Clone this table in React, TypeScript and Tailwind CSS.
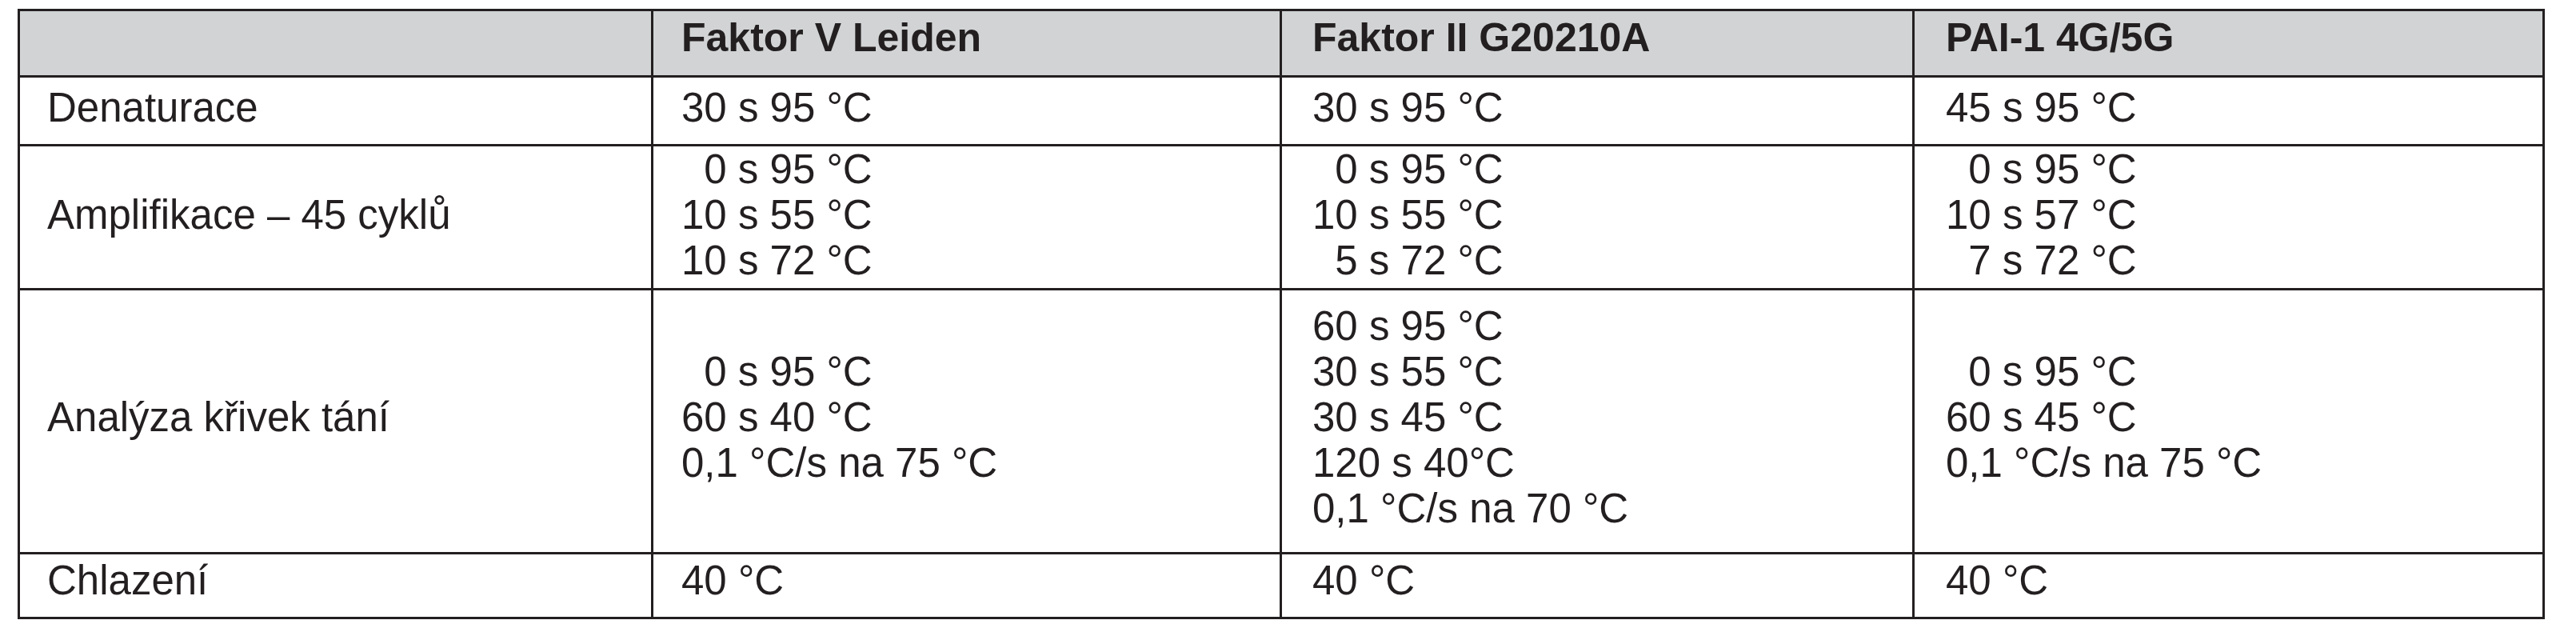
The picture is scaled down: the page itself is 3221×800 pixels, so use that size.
const NB = "\u00a0\u00a0"

// column left paddings, measured from the reference
const colPad = ["pl-[34px]", "pl-[35px]", "pl-[38px]", "pl-[39px]"]

const header = ["", "Faktor V Leiden", "Faktor II G20210A", "PAI-1 4G/5G"]

const rows: { cls: string; cells: string[][] }[] = [
  {
    cls: "h-[86px] pt-[9px] pb-[17px]",
    cells: [["Denaturace"], ["30 s 95 °C"], ["30 s 95 °C"], ["45 s 95 °C"]],
  },
  {
    cls: "h-[180px] pt-0 pb-[6px]",
    cells: [
      ["Amplifikace – 45 cyklů"],
      [NB + "0 s 95 °C", "10 s 55 °C", "10 s 72 °C"],
      [NB + "0 s 95 °C", "10 s 55 °C", NB + "5 s 72 °C"],
      [NB + "0 s 95 °C", "10 s 57 °C", NB + "7 s 72 °C"],
    ],
  },
  {
    cls: "h-[330px] pt-[16px] pb-[26px]",
    cells: [
      ["Analýza křivek tání"],
      [NB + "0 s 95 °C", "60 s 40 °C", "0,1 °C/s na 75 °C"],
      ["60 s 95 °C", "30 s 55 °C", "30 s 45 °C", "120 s 40°C", "0,1 °C/s na 70 °C"],
      [NB + "0 s 95 °C", "60 s 45 °C", "0,1 °C/s na 75 °C"],
    ],
  },
  {
    cls: "h-[81px] pt-[4px] pb-[17px]",
    cells: [["Chlazení"], ["40 °C"], ["40 °C"], ["40 °C"]],
  },
]

export default function App() {
  return (
    <div className="min-h-screen bg-white pt-[11px] pl-[22px] font-['Liberation_Sans',Arial,sans-serif] text-[#231f20]">
      <div className="grid w-[3160px] grid-cols-[792px_786px_791px_788px] border-l-[3px] border-t-[3px] border-[#231f20]">
        {header.map((h, i) => (
          <div
            key={"h" + i}
            className={`flex h-[83px] items-center border-b-[3px] border-r-[3px] border-[#231f20] bg-[#d1d3d4] pt-[5px] pb-[18px] text-[50px] font-bold leading-[57px] ${colPad[i]}`}
          >
            {h}
          </div>
        ))}

        {rows.map((row, r) =>
          row.cells.map((lines, c) => (
            <div
              key={r + "-" + c}
              className={`flex flex-col justify-center border-b-[3px] border-r-[3px] border-[#231f20] text-[51px] leading-[57px] whitespace-pre ${row.cls} ${colPad[c]}`}
            >
              {lines.map((l, k) => (
                <div key={k}>{l}</div>
              ))}
            </div>
          ))
        )}
      </div>
    </div>
  )
}
